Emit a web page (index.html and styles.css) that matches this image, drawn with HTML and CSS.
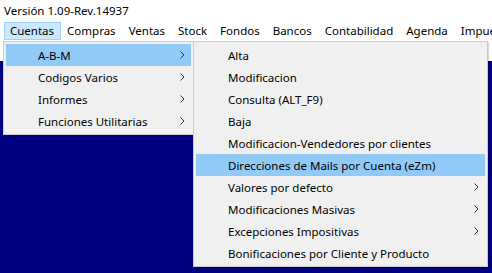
FILE: index.html
```html
<!DOCTYPE html>
<html lang="es">
<head>
  <meta charset="UTF-8">
  <title>Cuentas</title>
  <link rel="stylesheet" href="styles.css">
</head>
<body>

  <!-- Window header: version and main menu -->
  <div class="top-area">
    <div class="version">Versión 1.09-Rev.14937</div>
    <div class="menubar">
      <div class="menubar-item open">Cuentas</div>
      <div class="menubar-item">Compras</div>
      <div class="menubar-item">Ventas</div>
      <div class="menubar-item">Stock</div>
      <div class="menubar-item">Fondos</div>
      <div class="menubar-item">Bancos</div>
      <div class="menubar-item">Contabilidad</div>
      <div class="menubar-item">Agenda</div>
      <div class="menubar-item">Impuestos</div>
    </div>
  </div>

  <div class="workspace"></div>

  <!-- Dropdown of Cuentas -->
  <div class="menu menu-cuentas">
    <div class="menu-item active">
      <span>A-B-M</span>
      <svg class="arrow" width="5" height="8" viewBox="0 0 5 8"><polyline points="0.5,0.5 4,4 0.5,7.5" fill="none" stroke="#333" stroke-width="1"/></svg>
    </div>
    <div class="menu-item">
      <span>Codigos Varios</span>
      <svg class="arrow" width="5" height="8" viewBox="0 0 5 8"><polyline points="0.5,0.5 4,4 0.5,7.5" fill="none" stroke="#333" stroke-width="1"/></svg>
    </div>
    <div class="menu-item">
      <span>Informes</span>
      <svg class="arrow" width="5" height="8" viewBox="0 0 5 8"><polyline points="0.5,0.5 4,4 0.5,7.5" fill="none" stroke="#333" stroke-width="1"/></svg>
    </div>
    <div class="menu-item">
      <span>Funciones Utilitarias</span>
      <svg class="arrow" width="5" height="8" viewBox="0 0 5 8"><polyline points="0.5,0.5 4,4 0.5,7.5" fill="none" stroke="#333" stroke-width="1"/></svg>
    </div>
  </div>

  <!-- Submenu of A-B-M -->
  <div class="menu menu-abm">
    <div class="menu-item"><span>Alta</span></div>
    <div class="menu-item"><span>Modificacion</span></div>
    <div class="menu-item"><span>Consulta (ALT_F9)</span></div>
    <div class="menu-item"><span>Baja</span></div>
    <div class="menu-item"><span>Modificacion-Vendedores por clientes</span></div>
    <div class="menu-item active"><span>Direcciones de Mails por Cuenta (eZm)</span></div>
    <div class="menu-item">
      <span>Valores por defecto</span>
      <svg class="arrow" width="5" height="8" viewBox="0 0 5 8"><polyline points="0.5,0.5 4,4 0.5,7.5" fill="none" stroke="#333" stroke-width="1"/></svg>
    </div>
    <div class="menu-item">
      <span>Modificaciones Masivas</span>
      <svg class="arrow" width="5" height="8" viewBox="0 0 5 8"><polyline points="0.5,0.5 4,4 0.5,7.5" fill="none" stroke="#333" stroke-width="1"/></svg>
    </div>
    <div class="menu-item">
      <span>Excepciones Impositivas</span>
      <svg class="arrow" width="5" height="8" viewBox="0 0 5 8"><polyline points="0.5,0.5 4,4 0.5,7.5" fill="none" stroke="#333" stroke-width="1"/></svg>
    </div>
    <div class="menu-item"><span>Bonificaciones por Cliente y Producto</span></div>
  </div>

</body>
</html>
```

FILE: styles.css
```css
/* Page */
body {
  margin: 0;
  width: 492px;
  height: 273px;
  overflow: hidden;
  background-color: #000080;
  font-family: 'Noto Sans', 'Open Sans', sans-serif;
  font-size: 11.5px;
  color: #000;
  position: relative;
}

/* White header with version and menu bar */
.top-area {
  background-color: #fff;
  height: 61px;
}

.version {
  padding: 3px 0 0 4px;
  height: 19px;
  line-height: 15px;
}

.menubar {
  display: flex;
  padding-left: 4px;
  white-space: nowrap;
  overflow: hidden;
}

.menubar-item {
  height: 16px;
  line-height: 16px;
  padding: 0 6px 0 5px;
  border: 1px solid transparent;
}

.menubar-item.open {
  background-color: #cce8ff;
  border-color: #99d1ff;
}

.workspace {
  height: 212px;
}

/* Popup menus */
.menu {
  position: absolute;
  display: flex;
  flex-direction: column;
  padding: 2px;
  background-color: #f0f0f0;
  border: 1px solid #ccc;
  box-shadow: 1px 1px 1px rgba(0, 0, 0, 0.15);
}

.menu-cuentas {
  left: 3px;
  top: 41px;
  width: 185px;
}

.menu-abm {
  left: 193px;
  top: 41px;
  width: 289px;
}

.menu-item {
  display: flex;
  align-items: center;
  justify-content: space-between;
  height: 22px;
  padding: 0 6px 0 32px;
  white-space: nowrap;
}

.menu-item.active {
  background-color: #91c9f7;
}

.arrow {
  display: block;
}
```
